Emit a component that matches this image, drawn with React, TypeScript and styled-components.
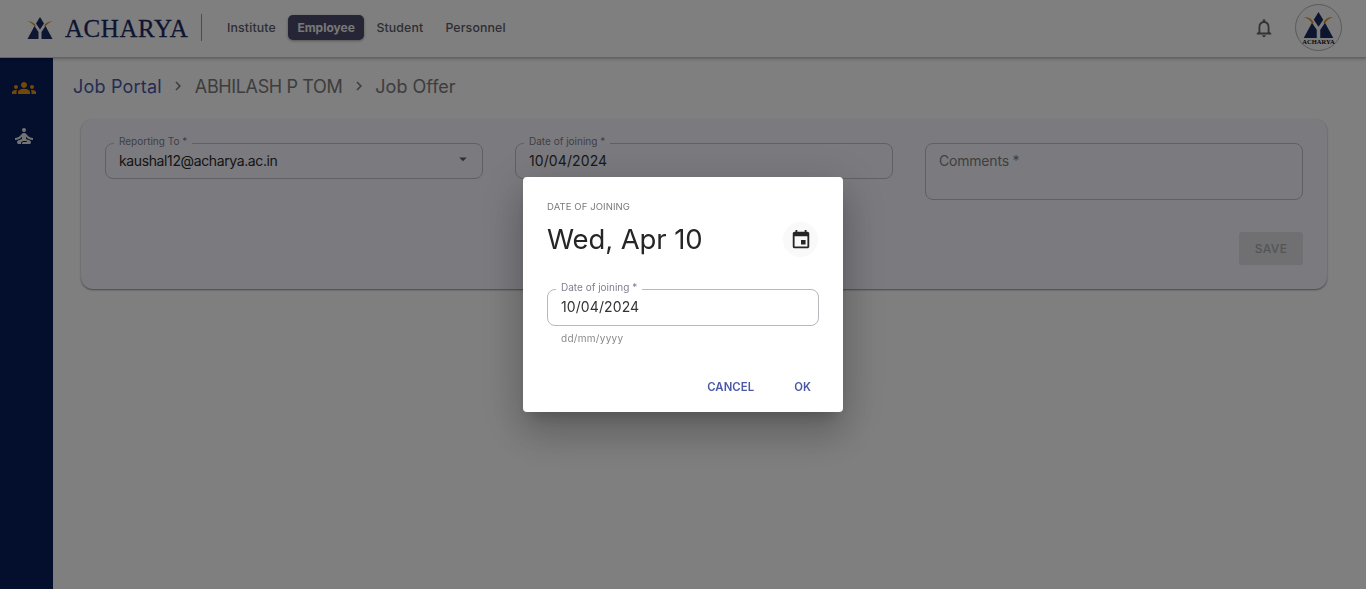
import styled, { createGlobalStyle } from "styled-components";
import {
  MdArrowDropDown,
  MdChevronRight,
  MdEvent,
  MdGroups,
  MdOutlineNotifications,
  MdSelfImprovement,
} from "react-icons/md";

const GlobalStyle = createGlobalStyle`
  html, body {
    margin: 0;
    padding: 0;
    height: 100%;
    overflow: hidden;
    background: #ffffff;
    font-family: "Inter", "Roboto", sans-serif;
  }
  * { box-sizing: border-box; }
`;

const Page = styled.div`
  width: 1366px;
  height: 589px;
  display: flex;
  flex-direction: column;
  background: #fefefe;
`;

const Header = styled.header`
  height: 58px;
  flex: none;
  display: flex;
  align-items: center;
  padding: 0 24px 2px 27px;
  background: #ffffff;
  border-bottom: 1px solid #c4c4c4;
  box-shadow: 0 1px 3px rgba(0, 0, 0, 0.25);
  position: relative;
`;

const Brand = styled.div`
  display: flex;
  align-items: center;
  gap: 12px;
  width: 174px;
`;

const BrandName = styled.span`
  font-family: "Liberation Serif", serif;
  font-size: 25px;
  line-height: 30px;
  letter-spacing: 0.55px;
  color: #1c2a63;
  margin-top: 3px;
  -webkit-text-stroke: 0.3px #1c2a63;
`;

const Divider = styled.div`
  width: 1px;
  height: 27px;
  background: #9a9a9a;
  margin-right: 15.5px;
`;

const Nav = styled.nav`
  display: flex;
  align-items: center;
  gap: 3px;
`;

const NavItem = styled.div<{ $active?: boolean }>`
  height: 25px;
  padding: 0 ${(p) => (p.$active ? "9px" : "9.5px")};
  display: flex;
  align-items: center;
  border-radius: 5px;
  font-size: ${(p) => (p.$active ? "12px" : "12.3px")};
  font-weight: ${(p) => (p.$active ? 700 : 500)};
  letter-spacing: ${(p) => (p.$active ? "0" : "0.15px")};
  color: ${(p) => (p.$active ? "#eeeeee" : "#5b5b66")};
  background: ${(p) => (p.$active ? "#4a4a6a" : "transparent")};
  box-shadow: ${(p) => (p.$active ? "0 1px 3px rgba(0,0,0,.35)" : "none")};
`;

const HeaderEnd = styled.div`
  margin-left: auto;
  display: flex;
  align-items: center;
  gap: 20px;
  color: #666666;
`;

const Avatar = styled.div`
  width: 47px;
  height: 47px;
  border-radius: 50%;
  border: 1px solid #b4b4b4;
  display: flex;
  flex-direction: column;
  align-items: center;
  justify-content: center;
  padding-top: 1px;
  background: #fbfbfb;
`;

const AvatarLabel = styled.span`
  font-family: "Liberation Serif", serif;
  font-size: 6.5px;
  line-height: 7px;
  color: #111111;
  font-weight: 700;
`;

const Body = styled.div`
  flex: 1;
  display: flex;
  min-height: 0;
`;

const Sidebar = styled.aside`
  width: 53px;
  flex: none;
  background: #081c5a;
  display: flex;
  flex-direction: column;
  align-items: center;
  padding: 18px 5px 0 0;
  gap: 24px;
`;

const SideIcon = styled.div<{ $active?: boolean }>`
  height: 24px;
  display: flex;
  align-items: center;
  color: ${(p) => (p.$active ? "#e8930c" : "#e4e4e4")};
  font-size: 24px;
`;

const Main = styled.main`
  flex: 1;
  padding: 15px 39px 0 20px;
`;

const Crumbs = styled.div`
  display: flex;
  align-items: center;
  height: 26px;
  font-size: 18px;
  color: #7a7a7a;
  margin-bottom: 20px;
`;

const CrumbLink = styled.span`
  color: #4a58a8;
  letter-spacing: 0.2px;
`;

const CrumbText = styled.span<{ $tight?: boolean }>`
  letter-spacing: ${(p) => (p.$tight ? "-0.37px" : "0")};
`;

const CrumbSep = styled.span`
  display: flex;
  width: 33px;
  justify-content: center;
  font-size: 18px;
  color: #7a7a7a;
`;

const Card = styled.section`
  margin-left: 8px;
  height: 170px;
  padding: 24px 24px 0;
  background: #f6f6fe;
  border-radius: 12px;
  box-shadow: 0 1px 2px rgba(0, 0, 0, 0.45);
`;

const FieldGrid = styled.div`
  display: grid;
  grid-template-columns: repeat(3, 378px);
  gap: 32px;
  align-items: start;
`;

const Outlined = styled.div<{ $h: number; $dark?: boolean }>`
  position: relative;
  height: ${(p) => p.$h}px;
  display: flex;
  align-items: ${(p) => (p.$h > 40 ? "flex-start" : "center")};
  justify-content: space-between;
  padding: ${(p) => (p.$h > 40 ? "8px 13px" : "0 13px 2px")};
  border: 1px solid ${(p) => (p.$dark ? "#b8b8be" : "#c0c0c6")};
  border-radius: 8px;
  font-size: 14px;
  letter-spacing: 0.1px;
  color: #333333;
`;

const Legend = styled.label<{ $bg: string }>`
  position: absolute;
  top: -9px;
  left: 8px;
  padding: 0 5px;
  font-size: 10px;
  line-height: 12px;
  letter-spacing: 0;
  color: #7f7f8f;
  background: ${(p) => p.$bg};
`;

const Email = styled.span`
  letter-spacing: -0.38px;
  color: #2a2a2a;
`;

const Muted = styled.span`
  color: #808080;
  letter-spacing: -0.2px;
`;

const SelectArrow = styled.span`
  display: flex;
  margin: -2px -3px 0 0;
  font-size: 18px;
  color: #5f5f5f;
`;

const CardFooter = styled.div`
  display: flex;
  justify-content: flex-end;
  margin-top: 32px;
`;

const SaveButton = styled.button`
  width: 64px;
  height: 33px;
  border: none;
  border-radius: 3px;
  background: #e0e0e4;
  color: #a8a8ac;
  font-family: inherit;
  font-size: 12px;
  font-weight: 500;
  letter-spacing: 0.4px;
`;

const Backdrop = styled.div`
  position: fixed;
  inset: 0;
  background: rgba(0, 0, 0, 0.5);
  display: flex;
  justify-content: center;
  padding: 177px 0 0 0;
`;

const Dialog = styled.div`
  width: 320px;
  height: 235px;
  display: flex;
  flex-direction: column;
  background: #ffffff;
  border-radius: 4px;
  box-shadow: 0 11px 15px -7px rgba(0, 0, 0, 0.2), 0 24px 38px 3px rgba(0, 0, 0, 0.14),
    0 9px 46px 8px rgba(0, 0, 0, 0.12);
`;

const DialogHead = styled.div`
  padding: 23px 24px 0;
`;

const Overline = styled.div`
  font-size: 9.5px;
  line-height: 13px;
  letter-spacing: 0.1px;
  color: #7a7a7a;
`;

const DateRow = styled.div`
  display: flex;
  align-items: center;
  justify-content: space-between;
  margin-top: 8px;
  padding-right: 1px;
`;

const DateTitle = styled.div`
  font-size: 27.5px;
  line-height: 34px;
  color: #262626;
  letter-spacing: -0.1px;
`;

const ModeButton = styled.div`
  width: 35px;
  height: 35px;
  margin-top: 1px;
  border-radius: 50%;
  background: #f9f9f9;
  color: #262626;
  font-size: 22px;
  display: flex;
  align-items: center;
  justify-content: center;
`;

const DialogField = styled.div`
  padding: 0 24px;
  margin-top: 32px;
`;

const Hint = styled.div`
  font-size: 10px;
  line-height: 12px;
  letter-spacing: 0.3px;
  color: #8a8a8a;
  margin: 6px 0 0 14px;
`;

const DialogActions = styled.div`
  margin-top: auto;
  height: 35px;
  display: flex;
  justify-content: flex-end;
  align-items: flex-start;
  gap: 40px;
  padding: 2px 32px 0 0;
`;

const TextButton = styled.button`
  border: none;
  background: transparent;
  padding: 0;
  height: 16px;
  font-family: inherit;
  font-size: 11.3px;
  font-weight: 600;
  letter-spacing: 0.1px;
  color: #4a58a8;
`;

// triangles and swoosh of the Acharya mark
const LogoMark = ({ width, height }: { width: number; height: number }) => (
  <svg width={width} height={height} viewBox="0 0 50 44" aria-hidden="true">
    <path d="M0 9 C8 8 13 11 17 18 L14 19 C11 14 7 11 0 9Z" fill="#d8961f" />
    <path d="M50 9 C42 8 37 11 33 18 L36 19 C39 14 43 11 50 9Z" fill="#d8961f" />
    <path d="M25 0 L33 13 L25 25 L17 13Z" fill="#1c2a63" />
    <path d="M14 18 L22 30 L22 44 L0 44Z" fill="#1c2a63" />
    <path d="M36 18 L28 30 L28 44 L50 44Z" fill="#1c2a63" />
  </svg>
);

export default function App() {
  return (
    <Page>
      <GlobalStyle />
      <Header>
        <Brand>
          <LogoMark width={26} height={22} />
          <BrandName>ACHARYA</BrandName>
        </Brand>
        <Divider />
        <Nav>
          <NavItem>Institute</NavItem>
          <NavItem $active>Employee</NavItem>
          <NavItem>Student</NavItem>
          <NavItem>Personnel</NavItem>
        </Nav>
        <HeaderEnd>
          <MdOutlineNotifications size={22} />
          <Avatar>
            <LogoMark width={31} height={26} />
            <AvatarLabel>ACHARYA</AvatarLabel>
          </Avatar>
        </HeaderEnd>
      </Header>
      <Body>
        <Sidebar>
          <SideIcon $active>
            <MdGroups />
          </SideIcon>
          <SideIcon>
            <MdSelfImprovement />
          </SideIcon>
        </Sidebar>
        <Main>
          <Crumbs>
            <CrumbLink>Job Portal</CrumbLink>
            <CrumbSep>
              <MdChevronRight />
            </CrumbSep>
            <CrumbText $tight>ABHILASH P TOM</CrumbText>
            <CrumbSep>
              <MdChevronRight />
            </CrumbSep>
            <CrumbText>Job Offer</CrumbText>
          </Crumbs>
          <Card>
            <FieldGrid>
              <Outlined $h={36}>
                <Legend $bg="#f6f6fe">Reporting To *</Legend>
                <Email>kaushal12@acharya.ac.in</Email>
                <SelectArrow>
                  <MdArrowDropDown />
                </SelectArrow>
              </Outlined>
              <Outlined $h={36}>
                <Legend $bg="#f6f6fe">Date of joining *</Legend>
                10/04/2024
              </Outlined>
              <Outlined $h={57}>
                <Muted>Comments *</Muted>
              </Outlined>
            </FieldGrid>
            <CardFooter>
              <SaveButton disabled>SAVE</SaveButton>
            </CardFooter>
          </Card>
        </Main>
      </Body>
      <Backdrop>
        <Dialog>
          <DialogHead>
            <Overline>DATE OF JOINING</Overline>
            <DateRow>
              <DateTitle>Wed, Apr 10</DateTitle>
              <ModeButton>
                <MdEvent />
              </ModeButton>
            </DateRow>
          </DialogHead>
          <DialogField>
            <Outlined $h={37} $dark>
              <Legend $bg="#ffffff">Date of joining *</Legend>
              10/04/2024
            </Outlined>
            <Hint>dd/mm/yyyy</Hint>
          </DialogField>
          <DialogActions>
            <TextButton>CANCEL</TextButton>
            <TextButton>OK</TextButton>
          </DialogActions>
        </Dialog>
      </Backdrop>
    </Page>
  );
}
